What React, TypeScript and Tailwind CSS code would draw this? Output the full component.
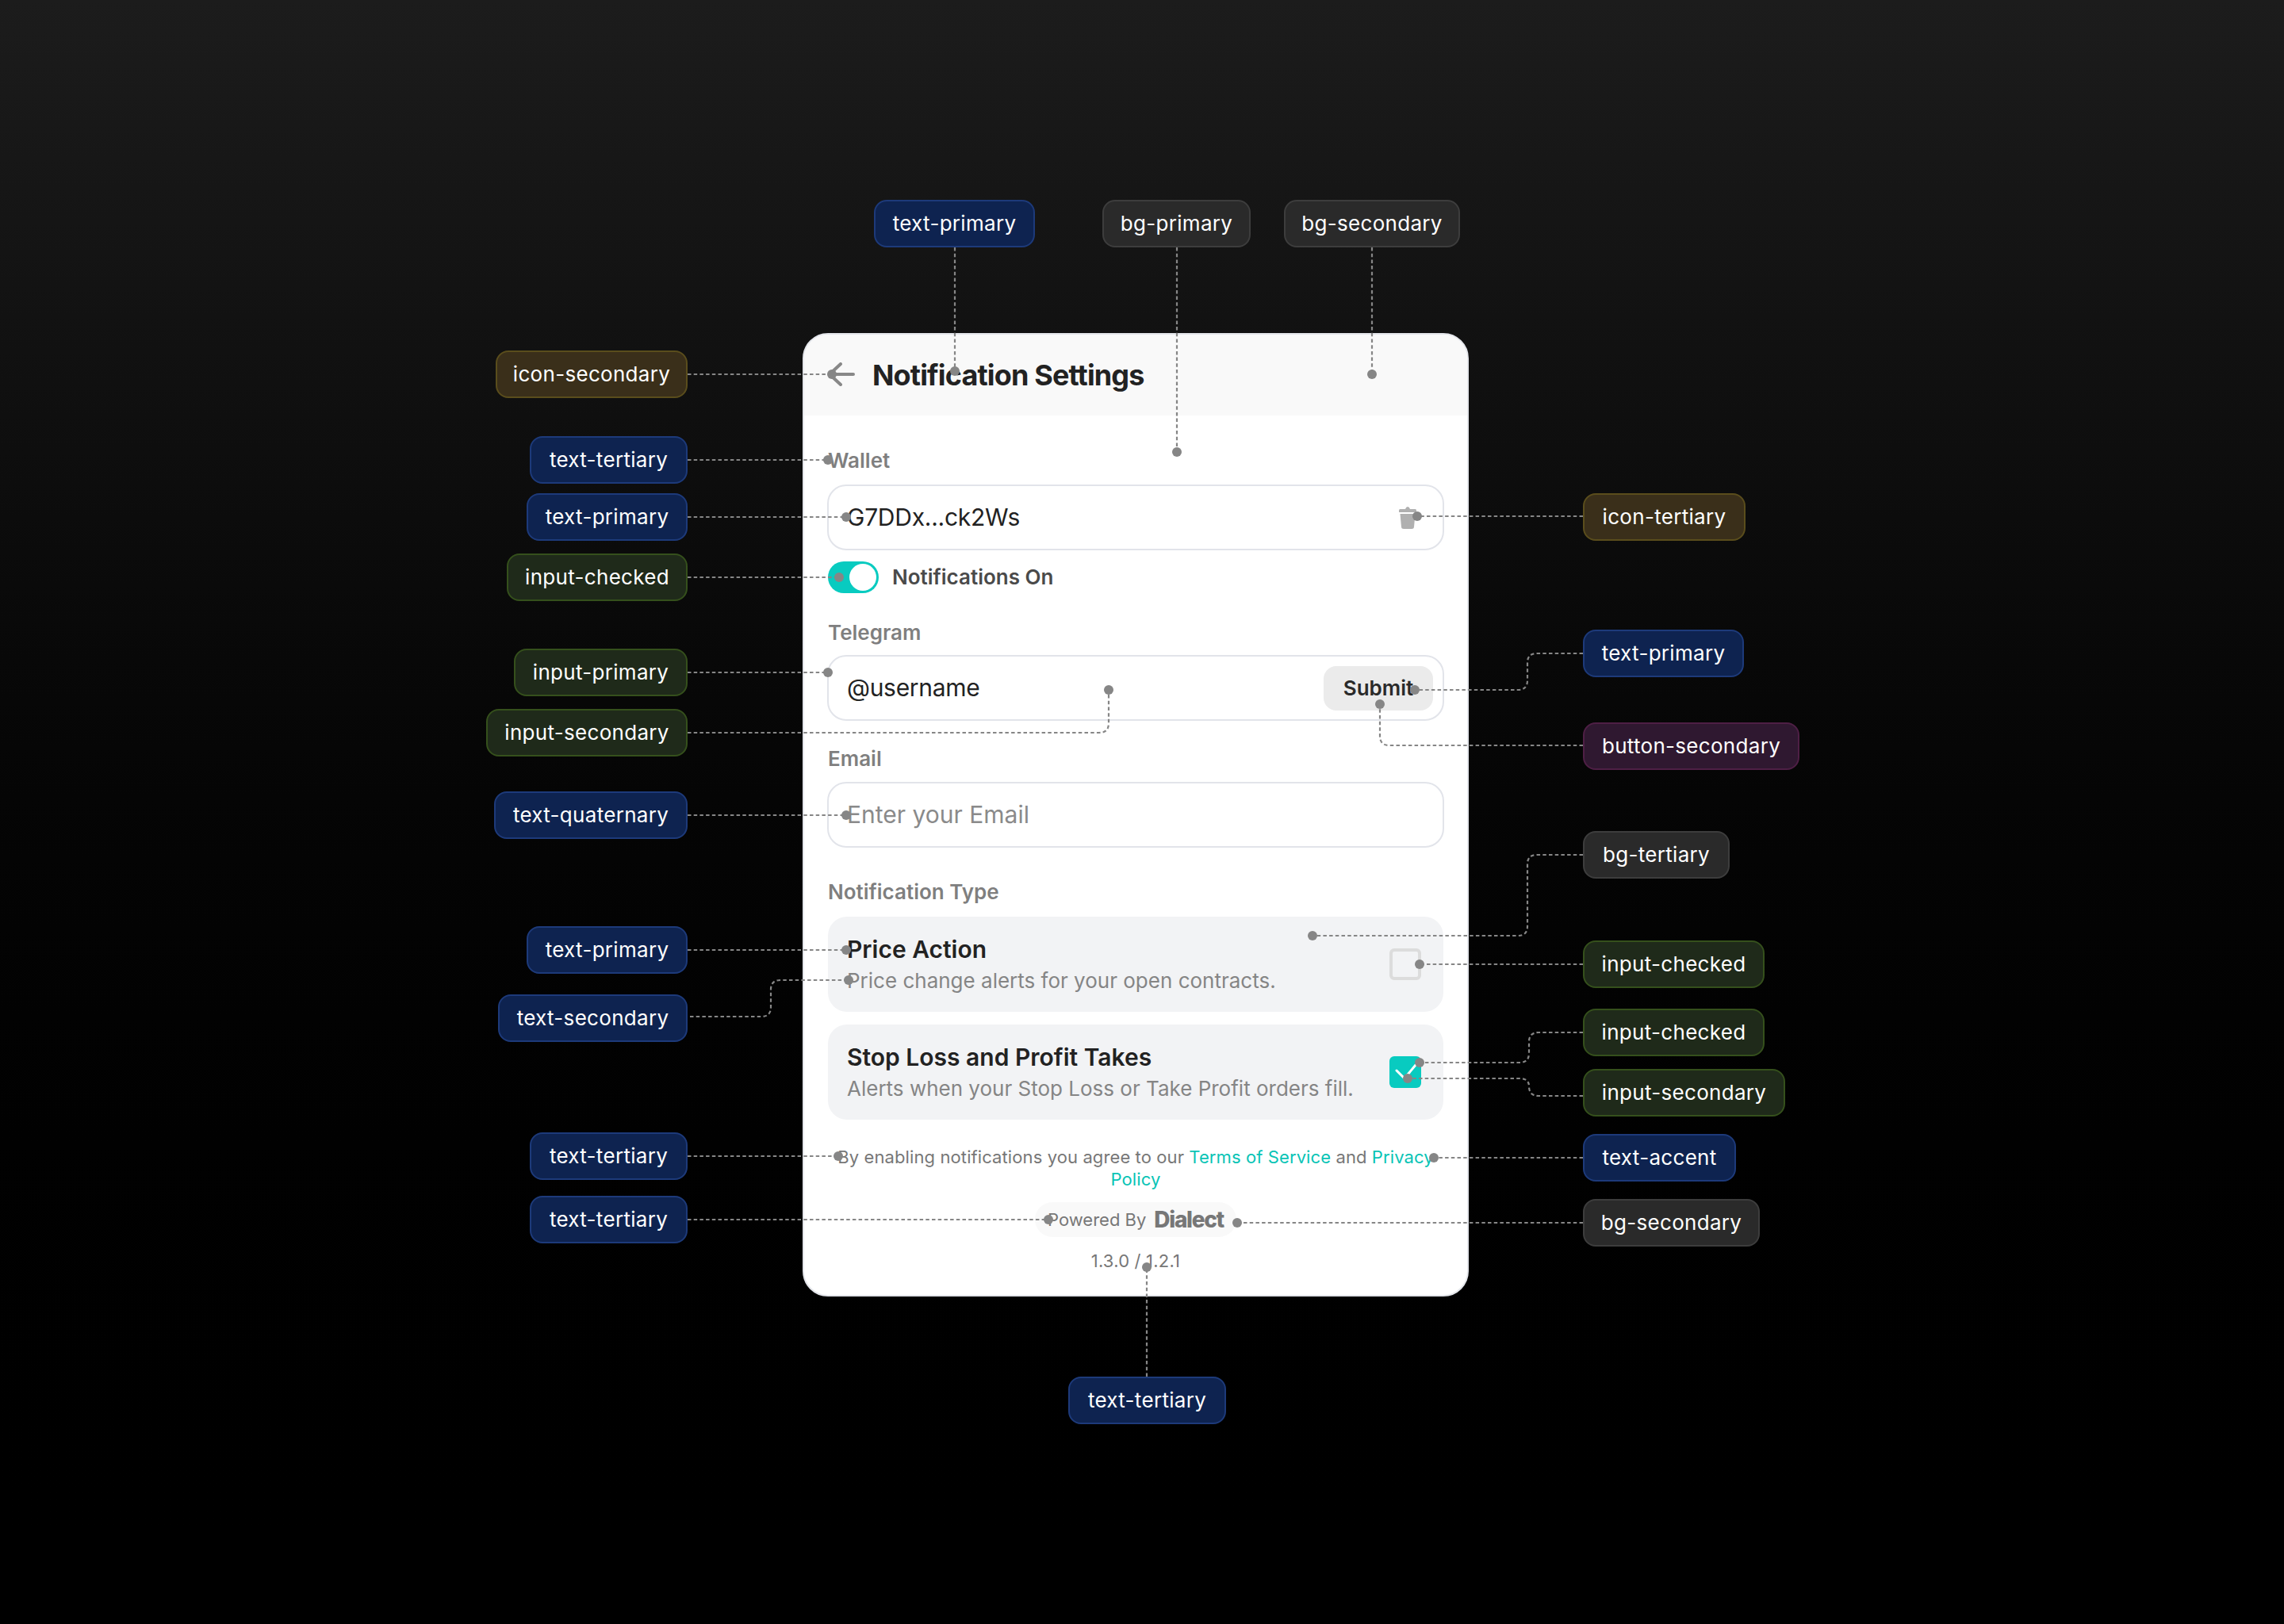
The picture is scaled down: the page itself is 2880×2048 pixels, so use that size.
import React from "react";

const blue = "bg-[#0e2350] border-[#1d3a7a]";
const olive = "bg-[#3a2f1a] border-[#5a4d1c]";
const green = "bg-[#1f2a1a] border-[#35501c]";
const purple = "bg-[#2f1830] border-[#4e1f45]";
const gray = "bg-[#2a2a2a] border-[#3d3d3d]";

const labels: { t: string; c: string; p: string }[] = [
  { t: "text-primary", c: blue, p: "left-[1102px] top-[252px] w-[203px]" },
  { t: "bg-primary", c: gray, p: "left-[1390px] top-[252px] w-[187px]" },
  { t: "bg-secondary", c: gray, p: "left-[1619px] top-[252px] w-[222px]" },
  { t: "icon-secondary", c: olive, p: "left-[625px] top-[442px] w-[242px]" },
  { t: "text-tertiary", c: blue, p: "left-[668px] top-[550px] w-[199px]" },
  { t: "text-primary", c: blue, p: "left-[664px] top-[622px] w-[203px]" },
  { t: "input-checked", c: green, p: "left-[639px] top-[698px] w-[228px]" },
  { t: "input-primary", c: green, p: "left-[648px] top-[818px] w-[219px]" },
  { t: "input-secondary", c: green, p: "left-[613px] top-[894px] w-[254px]" },
  { t: "text-quaternary", c: blue, p: "left-[623px] top-[998px] w-[244px]" },
  { t: "text-primary", c: blue, p: "left-[664px] top-[1168px] w-[203px]" },
  { t: "text-secondary", c: blue, p: "left-[628px] top-[1254px] w-[239px]" },
  { t: "text-tertiary", c: blue, p: "left-[668px] top-[1428px] w-[199px]" },
  { t: "text-tertiary", c: blue, p: "left-[668px] top-[1508px] w-[199px]" },
  { t: "text-tertiary", c: blue, p: "left-[1347px] top-[1736px] w-[199px]" },
  { t: "icon-tertiary", c: olive, p: "left-[1996px] top-[622px] w-[205px]" },
  { t: "text-primary", c: blue, p: "left-[1996px] top-[794px] w-[203px]" },
  { t: "button-secondary", c: purple, p: "left-[1996px] top-[911px] w-[273px]" },
  { t: "bg-tertiary", c: gray, p: "left-[1996px] top-[1048px] w-[185px]" },
  { t: "input-checked", c: green, p: "left-[1996px] top-[1186px] w-[229px]" },
  { t: "input-checked", c: green, p: "left-[1996px] top-[1272px] w-[229px]" },
  { t: "input-secondary", c: green, p: "left-[1996px] top-[1348px] w-[255px]" },
  { t: "text-accent", c: blue, p: "left-[1996px] top-[1430px] w-[193px]" },
  { t: "bg-secondary", c: gray, p: "left-[1996px] top-[1512px] w-[223px]" },
];

const paths = [
  "M1204 312V468",
  "M1484 312V570",
  "M1730 312V472",
  "M867 472H1049",
  "M867 580H1044",
  "M867 652H1067",
  "M867 728H1058",
  "M867 848H1044",
  "M867 924H1386Q1398 924 1398 912V870",
  "M867 1028H1067",
  "M867 1198H1067",
  "M870 1282H960Q972 1282 972 1270V1248Q972 1236 984 1236H1070",
  "M867 1458H1057",
  "M867 1538H1322",
  "M1446 1736V1598",
  "M1996 651H1787",
  "M1996 824H1938Q1926 824 1926 836V858Q1926 870 1914 870H1784",
  "M1996 940H1752Q1740 940 1740 928V888",
  "M1996 1078H1938Q1926 1078 1926 1090V1168Q1926 1180 1914 1180H1655",
  "M1996 1216H1790",
  "M1996 1302H1940Q1928 1302 1928 1314V1328Q1928 1340 1916 1340H1790",
  "M1996 1382H1940Q1928 1382 1928 1370Q1928 1360 1916 1360H1775",
  "M1996 1460H1808",
  "M1996 1542H1560",
];

const dots: [number, number][] = [
  [1204, 468], [1484, 570], [1730, 472], [1049, 472], [1044, 580], [1067, 652], [1058, 728],
  [1044, 848], [1398, 870], [1067, 1028], [1067, 1198], [1070, 1236], [1057, 1458], [1322, 1538],
  [1446, 1598], [1787, 651], [1784, 870], [1740, 888], [1655, 1180], [1790, 1216], [1790, 1340],
  [1775, 1360], [1808, 1460], [1560, 1542],
];

function Field({ children }: { children: React.ReactNode }) {
  return (
    <div className="-mx-px flex h-[83px] items-center justify-between rounded-[24px] border-2 border-[#e2e4ea] bg-white pl-[23px] pr-[12px]">
      {children}
    </div>
  );
}

function Label({ children, className }: { children: React.ReactNode; className: string }) {
  return <div className={`text-[26px] leading-[32px] font-semibold text-[#7f7f7f] ${className}`}>{children}</div>;
}

function TypeCard({ title, sub, checked, className }: { title: string; sub: string; checked: boolean; className: string }) {
  return (
    <div className={`flex h-[120px] items-center justify-between rounded-[24px] bg-[#f2f3f5] pl-[24px] pr-[28px] ${className}`}>
      <div>
        <div className="text-[30px] leading-[40px] font-semibold text-[#222222]">{title}</div>
        <div className="mt-[1px] text-[26px] leading-[38px] text-[#858585]">{sub}</div>
      </div>
      {checked ? (
        <div className="flex h-[40px] w-[40px] items-center justify-center rounded-[6px] bg-[#08cbc0]">
          <svg width="40" height="40" viewBox="0 0 40 40" fill="none">
            <path d="M9 18L19 28L33 11" stroke="#ffffff" strokeWidth="3" strokeLinecap="round" strokeLinejoin="round" />
          </svg>
        </div>
      ) : (
        <div className="h-[40px] w-[40px] rounded-[6px] border-4 border-[#dcdcdc]" />
      )}
    </div>
  );
}

export default function App() {
  return (
    <div className="relative h-[2048px] w-[2880px] overflow-hidden bg-gradient-to-b from-[#1c1c1c] to-[#000000] pl-[1012px] pt-[420px] font-['Inter',sans-serif]">
      <div className="box-border h-[1215px] w-[840px] overflow-hidden rounded-[32px] border-2 border-[#e4e6eb] bg-white">
        <div className="flex h-[102px] items-center gap-[24px] bg-[#f9f9f9] pl-[30px]">
          <svg width="34" height="30" viewBox="0 0 34 30" fill="none" className="mt-[-2px]">
            <path d="M2 15H32M16 2L2 15L16 28" stroke="#888888" strokeWidth="4" strokeLinecap="round" strokeLinejoin="round" />
          </svg>
          <div className="ml-[-2px] text-[36px] font-bold leading-[44px] tracking-[-0.85px] text-[#222222]">Notification Settings</div>
        </div>

        <div className="px-[30px]">
          <Label className="mt-[41px]">Wallet</Label>
          <div className="mt-[14px]">
            <Field>
              <span className="text-[30px] tracking-[-0.25px] text-[#222222]">G7DDx...ck2Ws</span>
              <svg width="24" height="30" viewBox="0 0 24 30" fill="none" className="mr-[20px]">
                <path d="M1 5.5Q1 4 2.5 4H9Q10 1 12 1Q14 1 15 4H21.5Q23 4 23 5.5V8H1Z" fill="#b0b0b0" />
                <path d="M2.5 10H21.5L20 26.5Q19.8 29 17 29H7Q4.2 29 4 26.5Z" fill="#b0b0b0" />
              </svg>
            </Field>
          </div>

          <div className="mt-[14px] flex items-center gap-[17px]">
            <div className="flex h-[40px] w-[64px] items-center justify-end rounded-full bg-[#08cbc0] pr-[3px]">
              <div className="h-[34px] w-[34px] rounded-full bg-white" />
            </div>
            <span className="text-[26px] leading-[40px] font-semibold text-[#4a4a4a]">Notifications On</span>
          </div>

          <Label className="mt-[34px]">Telegram</Label>
          <div className="mt-[12px]">
            <Field>
              <span className="text-[30px] tracking-[-0.3px] text-[#222222]">@username</span>
              <div className="flex h-[56px] w-[138px] items-center justify-center rounded-[16px] bg-[#ebebeb] text-[26px] font-semibold text-[#2a2a2a]">Submit</div>
            </Field>
          </div>

          <Label className="mt-[32px]">Email</Label>
          <div className="mt-[13px]">
            <Field>
              <span className="text-[30px] text-[#8a8a8a]">Enter your Email</span>
            </Field>
          </div>

          <Label className="mt-[40px]">Notification Type</Label>
          <TypeCard className="mt-[15px]" title="Price Action" sub="Price change alerts for your open contracts." checked={false} />
          <TypeCard className="mt-[16px]" title="Stop Loss and Profit Takes" sub="Alerts when your Stop Loss or Take Profit orders fill." checked />

          <div className="mt-[33px] text-center text-[22px] leading-[28px] tracking-[0.1px] text-[#777777]">
            By enabling notifications you agree to our <span className="text-[#08c4b6]">Terms of Service</span> and <span className="text-[#08c4b6]">Privacy Policy</span>
          </div>

          <div className="mt-[15px] flex justify-center">
            <div className="flex h-[44px] w-[254px] items-center justify-center gap-[10px] rounded-full bg-[#f9f9f9] text-[#777777]">
              <span className="text-[22px]">Powered By</span>
              <span className="text-[28px] font-extrabold tracking-[-1.3px]">Dialect</span>
            </div>
          </div>

          <div className="mt-[15px] text-center text-[22px] leading-[30px] tracking-[0.2px] text-[#777777]">1.3.0 / 1.2.1</div>
        </div>
      </div>

      <svg width="2880" height="2048" viewBox="0 0 2880 2048" fill="none" className="pointer-events-none absolute left-0 top-0">
        {paths.map((d, i) => (
          <path key={i} d={d} stroke="#868686" strokeWidth="2.2" strokeDasharray="4.5 3.2" />
        ))}
        {dots.map(([x, y], i) => (
          <circle key={i} cx={x} cy={y} r="6" fill="#868686" />
        ))}
      </svg>

      {labels.map((l, i) => (
        <div
          key={i}
          className={`absolute box-border flex h-[60px] items-center justify-center rounded-[16px] border-2 pb-[2px] text-[26px] tracking-[0.3px] text-white ${l.c} ${l.p}`}
        >
          {l.t}
        </div>
      ))}
    </div>
  );
}
